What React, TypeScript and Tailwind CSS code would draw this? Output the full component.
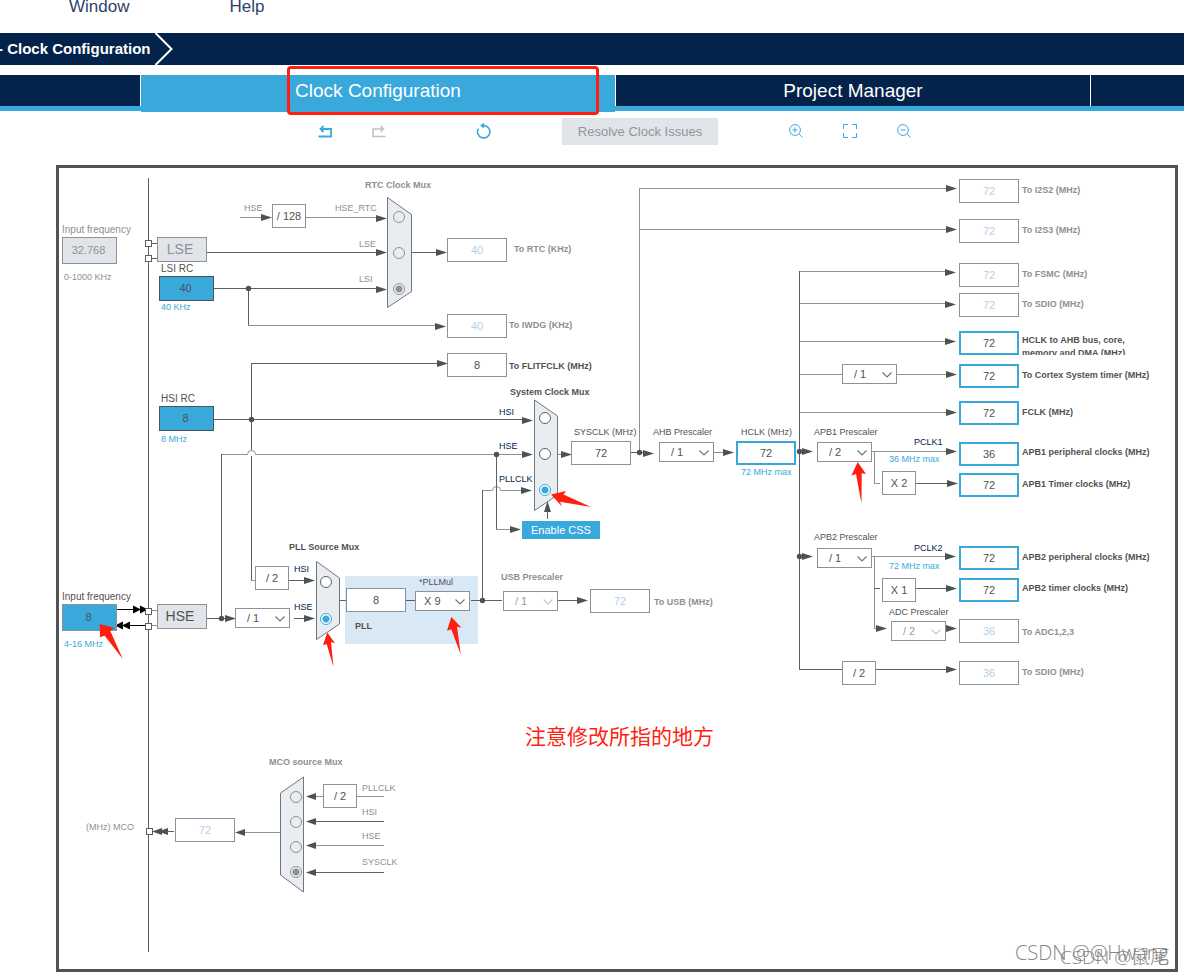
import { useState } from 'react';
import clsx from 'clsx';

// Diagram coordinates start at this corner of the frame.
const ORIGIN = { x: 59, y: 168 };
const WIDTH = 1116;
const HEIGHT = 801;

const at = (x: number, y: number) => ({ left: x - ORIGIN.x, top: y - ORIGIN.y });

type Tone = 'gray' | 'dark' | 'navy' | 'blue';

const toneClass: Record<Tone, string> = {
  gray: 'text-[#8f8f8f]',
  dark: 'text-[#525252]',
  navy: 'text-[#03234b]',
  blue: 'text-[#39a9dc]',
};

type Label = { text: string; x: number; y: number; tone: Tone; title?: boolean };

const labels: Label[] = [
  { text: '0-1000 KHz', x: 64, y: 277, tone: 'gray' },
  { text: '40 KHz', x: 161, y: 307, tone: 'blue' },
  { text: '8 MHz', x: 161, y: 439, tone: 'blue' },
  { text: '4-16 MHz', x: 64, y: 644, tone: 'blue' },
  { text: '72 MHz max', x: 741, y: 472, tone: 'blue' },
  { text: '36 MHz max', x: 889, y: 459, tone: 'blue' },
  { text: '72 MHz max', x: 889, y: 566, tone: 'blue' },
  { text: 'RTC Clock Mux', x: 365, y: 185, tone: 'gray', title: true },
  { text: 'System Clock Mux', x: 510, y: 392, tone: 'dark', title: true },
  { text: 'PLL Source Mux', x: 289, y: 547, tone: 'dark', title: true },
  { text: 'MCO source Mux', x: 269, y: 762, tone: 'gray', title: true },
  { text: 'PLL', x: 355, y: 626, tone: 'dark', title: true },
  { text: 'HSE', x: 244, y: 208, tone: 'gray' },
  { text: 'HSE_RTC', x: 335, y: 208, tone: 'gray' },
  { text: 'LSE', x: 359, y: 244, tone: 'gray' },
  { text: 'LSI', x: 359, y: 279, tone: 'gray' },
  { text: 'HSI', x: 499, y: 412, tone: 'navy' },
  { text: 'HSE', x: 499, y: 446, tone: 'navy' },
  { text: 'PLLCLK', x: 499, y: 479, tone: 'navy' },
  { text: 'HSI', x: 294, y: 569, tone: 'navy' },
  { text: 'HSE', x: 294, y: 607, tone: 'navy' },
  { text: 'PCLK1', x: 914, y: 442, tone: 'navy' },
  { text: 'PCLK2', x: 914, y: 548, tone: 'navy' },
  { text: 'PLLCLK', x: 362, y: 788, tone: 'gray' },
  { text: 'HSI', x: 362, y: 812, tone: 'gray' },
  { text: 'HSE', x: 362, y: 836, tone: 'gray' },
  { text: 'SYSCLK', x: 362, y: 862, tone: 'gray' },
];

type Field = {
  id: string;
  label: string;
  value: string;
  x: number;
  y: number;
  lx: number;
  ly: number;
  kind: 'off' | 'on' | 'main';
  bold?: boolean;
};

const fields: Field[] = [
  { id: 'rtc', label: 'To RTC (KHz)', value: '40', x: 447, y: 238, lx: 514, ly: 249, kind: 'off', bold: true },
  { id: 'iwdg', label: 'To IWDG (KHz)', value: '40', x: 447, y: 314, lx: 509, ly: 325, kind: 'off', bold: true },
  { id: 'flitf', label: 'To FLITFCLK (MHz)', value: '8', x: 447, y: 353, lx: 509, ly: 366, kind: 'on', bold: true },
  { id: 'sysclk', label: 'SYSCLK (MHz)', value: '72', x: 571, y: 441, lx: 574, ly: 432, kind: 'on' },
  { id: 'hclk', label: 'HCLK (MHz)', value: '72', x: 736, y: 441, lx: 741, ly: 432, kind: 'main' },
  { id: 'usb', label: 'To USB (MHz)', value: '72', x: 590, y: 589, lx: 654, ly: 602, kind: 'off', bold: true },
  { id: 'mco', label: '(MHz) MCO', value: '72', x: 175, y: 818, lx: 86, ly: 827, kind: 'off' },
  { id: 'i2s2', label: 'To I2S2 (MHz)', value: '72', x: 959, y: 179, lx: 1022, ly: 190, kind: 'off', bold: true },
  { id: 'i2s3', label: 'To I2S3 (MHz)', value: '72', x: 959, y: 219, lx: 1022, ly: 230, kind: 'off', bold: true },
  { id: 'fsmc', label: 'To FSMC (MHz)', value: '72', x: 959, y: 263, lx: 1022, ly: 274, kind: 'off', bold: true },
  { id: 'sdio', label: 'To SDIO (MHz)', value: '72', x: 959, y: 293, lx: 1022, ly: 304, kind: 'off', bold: true },
  { id: 'cortex', label: 'To Cortex System timer (MHz)', value: '72', x: 959, y: 364, lx: 1022, ly: 375, kind: 'main', bold: true },
  { id: 'fclk', label: 'FCLK (MHz)', value: '72', x: 959, y: 401, lx: 1022, ly: 412, kind: 'main', bold: true },
  { id: 'apb1p', label: 'APB1 peripheral clocks (MHz)', value: '36', x: 959, y: 442, lx: 1022, ly: 452, kind: 'main', bold: true },
  { id: 'apb1t', label: 'APB1 Timer clocks (MHz)', value: '72', x: 959, y: 473, lx: 1022, ly: 484, kind: 'main', bold: true },
  { id: 'apb2p', label: 'APB2 peripheral clocks (MHz)', value: '72', x: 959, y: 546, lx: 1022, ly: 557, kind: 'main', bold: true },
  { id: 'apb2t', label: 'APB2 timer clocks (MHz)', value: '72', x: 959, y: 578, lx: 1022, ly: 588, kind: 'main', bold: true },
  { id: 'adc', label: 'To ADC1,2,3', value: '36', x: 959, y: 619, lx: 1022, ly: 632, kind: 'off', bold: true },
  { id: 'sdio2', label: 'To SDIO (MHz)', value: '36', x: 959, y: 661, lx: 1022, ly: 672, kind: 'off', bold: true },
];

type Source = {
  id: string;
  label: string;
  value: string;
  x: number;
  y: number;
  lx: number;
  ly: number;
  kind: 'disabled' | 'fixed' | 'external';
};

const sources: Source[] = [
  { id: 'lse-in', label: 'Input frequency', value: '32.768', x: 62, y: 237, lx: 62, ly: 230, kind: 'disabled' },
  { id: 'lsi', label: 'LSI RC', value: '40', x: 159, y: 276, lx: 161, ly: 269, kind: 'fixed' },
  { id: 'hsi', label: 'HSI RC', value: '8', x: 159, y: 406, lx: 161, ly: 399, kind: 'fixed' },
  { id: 'hse-in', label: 'Input frequency', value: '8', x: 62, y: 604, lx: 62, ly: 597, kind: 'external' },
];

const sourceClass = {
  disabled: 'h-[27px] border-[#8c9297] bg-[#e1e5e9] text-[#8c9297]',
  fixed: 'h-[25px] border-[#4b5357] bg-[#39a9dc] text-[#4b5357]',
  external: 'h-[27px] border-[#8c9297] bg-[#39a9dc] text-[#4b5357]',
};

const fieldClass = {
  off: 'border border-[#8c9297] text-[#b5cfe8]',
  on: 'border border-[#8c9297] text-[#525252]',
  main: 'border-2 border-[#39a9dc] text-[#525252]',
};

const powers = ['/ 1', '/ 2', '/ 4', '/ 8', '/ 16'];
const multipliers = ['X 2', 'X 3', 'X 4', 'X 5', 'X 6', 'X 7', 'X 8', 'X 9', 'X 10'];

const prescalers = [
  { id: 'hse-div', name: 'HSE divider', value: '/ 1', x: 235, y: 608, options: powers },
  { id: 'pllmul', label: '*PLLMul', name: 'PLLMul', value: 'X 9', x: 415, y: 591, lx: 419, ly: 582, options: multipliers },
  { id: 'usb-div', label: 'USB Prescaler', name: 'USB', value: '/ 1', x: 503, y: 591, lx: 501, ly: 577, options: powers, disabled: true, bold: true },
  { id: 'ahb', label: 'AHB Prescaler', name: 'AHB', value: '/ 1', x: 659, y: 442, lx: 653, ly: 432, options: powers },
  { id: 'cortex-div', name: 'Cortex timer divider', value: '/ 1', x: 842, y: 364, options: powers },
  { id: 'apb1', label: 'APB1 Prescaler', name: 'APB1', value: '/ 2', x: 817, y: 442, lx: 814, ly: 432, options: powers },
  { id: 'apb2', label: 'APB2 Prescaler', name: 'APB2', value: '/ 1', x: 817, y: 548, lx: 814, ly: 537, options: powers },
  { id: 'adc-div', label: 'ADC Prescaler', name: 'ADC', value: '/ 2', x: 891, y: 621, lx: 889, ly: 612, options: powers, disabled: true },
];

const factors = [
  { text: '/ 128', x: 272, y: 204 },
  { text: '/ 2', x: 255, y: 566 },
  { text: 'X 2', x: 882, y: 471 },
  { text: 'X 1', x: 882, y: 578 },
  { text: '/ 2', x: 842, y: 661 },
  { text: '/ 2', x: 323, y: 784 },
];

const muxes = [
  { name: 'RTC Clock Mux', x: 399, inputs: [['HSE_RTC', 217], ['LSE', 253], ['LSI', 289]], picked: 'LSI', disabled: true },
  { name: 'System Clock Mux', x: 545, inputs: [['HSI', 418], ['HSE', 454], ['PLLCLK', 490]], picked: 'PLLCLK' },
  { name: 'PLL Source Mux', x: 326, inputs: [['HSI', 582], ['HSE', 619]], picked: 'HSE' },
  { name: 'MCO source Mux', x: 296, inputs: [['PLLCLK', 797], ['HSI', 822], ['HSE', 847], ['SYSCLK', 872]], picked: 'SYSCLK', disabled: true },
] as { name: string; x: number; inputs: [string, number][]; picked: string; disabled?: boolean }[];

const darkWires = [
  'M148.5 178V952',
  'M151 243.5H157M151 258.5H157M207 252.5H380',
  'M214 288.5H380M248.5 288V325',
  'M411 252.5H440',
  'M214 419.5H526M251.5 363V450M251.5 456V580M251 363.5H440',
  'M221.5 454V618M207 618.5H230M294 618.5H308M289 580.5H308',
  'M496.5 454V529M482.5 490V600M547.5 505V519',
  'M631 452.5H648M799.5 271V670M799 669.5H842M876 669.5H950',
  'M916 483.5H950M916 588.5H950M874 588.5H880',
  'M340 600.5H346M406 600.5H415M471 600.5H502M558 600.5H582',
  'M312 821.5H384M312 872.5H384M158 831.5H174',
];

const lightWires = [
  'M240 217.5H266M306 217.5H380M248 325.5H440',
  'M221 454.5H247.5A4 4 0 0 1 255.5 454.5H526M558 454.5H565',
  'M482 490.5H492.5A4 4 0 0 1 500.5 490.5H526M496 529.5H515M251 580.5H255',
  'M639.5 188V452M639 188.5H950M639 229.5H950',
  'M799 271.5H950M799 303.5H950M799 341.5H950M799 374.5H842M897 374.5H950M799 412.5H950',
  'M714 452.5H728M872 451.5H950M874.5 451V483M874 483.5H880',
  'M872 556.5H950M874.5 556V628M874 628.5H880',
  'M312 796.5H323M357 796.5H384M312 845.5H384M242 832.5H280',
  'M151 610.5H157M151 625.5H157',
];

const rightTips = [
  [272, 217], [387, 218], [387, 252], [387, 289], [447, 252], [446, 326], [448, 363],
  [533, 420], [533, 454], [532, 490], [521, 529], [572, 454], [654, 453], [734, 452],
  [236, 618], [315, 580], [315, 618], [588, 600], [813, 451], [813, 556], [887, 628],
  [957, 188], [957, 229], [956, 272], [956, 304], [956, 341], [957, 374], [957, 412],
  [957, 451], [958, 483], [956, 556], [957, 588], [957, 628], [957, 669],
];

const leftTips = [
  [306, 796], [306, 821], [306, 845], [306, 872], [235, 832], [152, 831], [158, 831],
];

const joints = [
  [248, 288], [251, 419], [221, 618], [496, 454], [482, 600], [639, 452], [799, 451], [799, 556],
];

const pins = [
  [146, 240], [146, 255], [146, 608], [146, 623], [147, 828],
];

const muxShapes = [
  '387.5,197.5 411.5,214.5 411.5,291.5 387.5,307.5',
  '534.5,400 557.5,416 557.5,495 534.5,510.5',
  '316.5,561.5 339.5,578 339.5,624 316.5,639.5',
  '303.5,777 280.5,793 280.5,875 303.5,892',
];

const markers = [
  '551,494.5 566,491 563.5,494.5 591,507 560,501.7 562,506.5',
  '451.3,617 447,630.7 451.3,629.3 460.7,654.5 457,626.7 461.5,627.7',
  '327.3,632.5 323,645 326.7,644.3 333.5,667 331,642 335,643.3',
  '857.7,462 851.3,475.7 856,474 861.5,503.5 861.7,473.3 866,474',
  '99.7,624 100,637.3 104.7,635.7 122.8,659 110.3,631 114.5,628',
];

function Wiring() {
  return (
    <svg
      width={WIDTH}
      height={HEIGHT}
      viewBox={`${ORIGIN.x} ${ORIGIN.y} ${WIDTH} ${HEIGHT}`}
      className="block"
      fill="none"
      aria-hidden="true"
    >
      <rect x="345" y="576" width="133" height="68" fill="#d9e8f5" />
      <path d={lightWires.join('')} stroke="#8f9193" />
      <path d={darkWires.join('')} stroke="#5c6062" />
      {muxShapes.map((points) => (
        <polygon key={points} points={points} fill="#e9edf1" stroke="#70777c" />
      ))}
      {rightTips.map(([x, y]) => (
        <path key={`${x}-${y}`} d={`M${x} ${y + 0.5}l-11 -3.5v7z`} fill="#4d5254" />
      ))}
      {leftTips.map(([x, y]) => (
        <path key={`${x}-${y}`} d={`M${x} ${y + 0.5}l10 -3.5v7z`} fill="#4d5254" />
      ))}
      <path d="M547.5 501l-3.5 11h7z" fill="#4d5254" />
      <path d="M117 609.5H140M146 625.5H123" stroke="#000" />
      <path
        d="M141 609.5l-8 -4v8zM148 609.5l-8 -4v8zM115 625.5l8 -4v8zM122 625.5l8 -4v8z"
        fill="#000"
      />
      {joints.map(([x, y]) => (
        <circle key={`${x}-${y}`} cx={x + 0.5} cy={y + 0.5} r="2.7" fill="#4d5254" />
      ))}
      {pins.map(([x, y]) => (
        <rect key={`${x}-${y}`} x={x - 0.5} y={y + 0.5} width="6" height="6" fill="#fff" stroke="#5c6062" />
      ))}
    </svg>
  );
}

function Text({ text, x, y, tone, title }: Label) {
  return (
    <span
      className={clsx('absolute text-[9px] leading-3 whitespace-pre', title && 'font-bold', toneClass[tone])}
      style={at(x, y - 6)}
    >
      {text}
    </span>
  );
}

function OutputField({ field }: { field: Field }) {
  return (
    <>
      <label
        htmlFor={field.id}
        className={clsx(
          'absolute whitespace-nowrap text-[9px] leading-3',
          field.bold && 'font-bold',
          field.kind === 'off' ? 'text-[#8f8f8f]' : 'text-[#525252]',
        )}
        style={at(field.lx, field.ly - 6)}
      >
        {field.label}
      </label>
      <input
        id={field.id}
        readOnly
        value={field.value}
        disabled={field.kind === 'off'}
        className={clsx('absolute h-6 w-15 bg-white text-center text-[11px]', fieldClass[field.kind])}
        style={at(field.x, field.y)}
      />
    </>
  );
}

function SourceField({ source }: { source: Source }) {
  const [value, setValue] = useState(source.value);
  return (
    <>
      <label
        htmlFor={source.id}
        className={clsx(
          'absolute whitespace-nowrap text-[10px] leading-3',
          source.kind === 'disabled' ? 'text-[#8f8f8f]' : 'text-[#525252]',
        )}
        style={at(source.lx, source.ly - 6)}
      >
        {source.label}
      </label>
      <input
        id={source.id}
        value={value}
        onChange={(e) => setValue(e.target.value)}
        readOnly={source.kind === 'fixed'}
        disabled={source.kind === 'disabled'}
        className={clsx('absolute w-[55px] border pr-0.5 pb-0.5 text-center text-[11px]', sourceClass[source.kind])}
        style={at(source.x, source.y)}
      />
    </>
  );
}

function Prescaler({ item }: { item: (typeof prescalers)[number] }) {
  return (
    <>
      {item.label && (
        <label
          htmlFor={item.id}
          className={clsx(
            'absolute text-[9px] leading-3 whitespace-nowrap',
            item.bold ? 'font-bold text-[#8f8f8f]' : 'text-[#525252]',
          )}
          style={at(item.lx ?? item.x, (item.ly ?? item.y) - 6)}
        >
          {item.label}
        </label>
      )}
      <div className="absolute h-5 w-[55px]" style={at(item.x, item.y)}>
        <select
          id={item.id}
          aria-label={item.label ? undefined : item.name}
          defaultValue={item.value}
          disabled={item.disabled}
          className={clsx(
            'block h-full w-full appearance-none border border-[#8c9297] bg-white text-[11px] opacity-100',
            item.value.startsWith('X') ? 'pl-2' : 'pl-[11px]',
            item.disabled ? 'text-[#999999]' : 'text-[#525252]',
          )}
        >
          {item.options.map((option) => (
            <option key={option}>{option}</option>
          ))}
        </select>
        <svg
          width="10"
          height="6"
          viewBox="0 0 10 6"
          fill="none"
          stroke={item.disabled ? '#c4c8cb' : '#70777c'}
          strokeWidth="1.2"
          className="pointer-events-none absolute top-2 right-[5px]"
        >
          <path d="M0.5 0.5L5 5L9.5 0.5" />
        </svg>
      </div>
    </>
  );
}

function MuxRadios({ mux }: { mux: (typeof muxes)[number] }) {
  const [picked, setPicked] = useState(mux.picked);
  return (
    <>
      {mux.inputs.map(([name, y]) => (
        <input
          key={name}
          type="radio"
          name={mux.name}
          aria-label={`${mux.name} ${name}`}
          checked={picked === name}
          disabled={mux.disabled}
          onChange={() => setPicked(name)}
          className={clsx(
            'absolute size-3 appearance-none rounded-full border',
            mux.disabled
              ? 'border-[#8c9297] checked:bg-[radial-gradient(circle,#8c9297_3px,#eef1f4_4px)]'
              : 'border-[#5c6062] bg-white checked:border-[#39a9dc] checked:bg-[radial-gradient(circle,#39a9dc_3px,#fff_4px)]',
          )}
          style={at(mux.x - 6, y - 6)}
        />
      ))}
    </>
  );
}

function ClockDiagram() {
  return (
    <main className="relative mr-1.5 mb-0.5 ml-14 overflow-hidden border-3 border-[#4f5455] bg-white">
      <Wiring />

      {sources.map((source) => (
        <SourceField key={source.id} source={source} />
      ))}
      {fields.map((field) => (
        <OutputField key={field.id} field={field} />
      ))}

      <label
        htmlFor="ahb-bus"
        className="absolute h-[21px] w-32 overflow-hidden text-[9px] leading-[13px] font-bold text-[#525252]"
        style={at(1022, 334)}
      >
        HCLK to AHB bus, core, memory and DMA (MHz)
      </label>
      <input
        id="ahb-bus"
        readOnly
        value="72"
        className="absolute h-6 w-15 border-2 border-[#39a9dc] bg-white text-center text-[11px] text-[#525252]"
        style={at(959, 331)}
      />
      <input
        aria-label="PLL input"
        readOnly
        value="8"
        className="absolute h-6 w-15 border border-[#8c9297] bg-white text-center text-[11px] text-[#525252]"
        style={at(346, 588)}
      />

      {prescalers.map((item) => (
        <Prescaler key={item.id} item={item} />
      ))}
      {factors.map((factor) => (
        <div
          key={`${factor.x}-${factor.y}`}
          className="absolute flex h-6 w-[34px] items-center justify-center border border-[#8c9297] bg-white text-[11px] text-[#525252]"
          style={at(factor.x, factor.y)}
        >
          {factor.text}
        </div>
      ))}

      <div
        className="absolute flex h-[25px] w-[50px] items-center justify-center border border-[#8c9297] bg-[#e1e5e9] pr-1 text-[14px] text-[#8c9297]"
        style={at(157, 237)}
      >
        LSE
      </div>
      <div
        className="absolute flex h-[25px] w-[50px] items-center justify-center border border-[#8c9297] bg-[#e1e5e9] pr-1 text-[14px] text-[#525252]"
        style={at(157, 604)}
      >
        HSE
      </div>

      {muxes.map((mux) => (
        <MuxRadios key={mux.name} mux={mux} />
      ))}
      {labels.map((label) => (
        <Text key={`${label.x}-${label.y}`} {...label} />
      ))}

      <button
        className="absolute h-[18px] w-[78px] bg-[#39a9dc] text-[11px] text-white"
        style={at(522, 521)}
      >
        Enable CSS
      </button>

      <p
        className="absolute font-['Noto_Sans_CJK_SC',sans-serif] text-[21px] leading-7 whitespace-nowrap text-[#ff1e10]"
        style={at(525, 721)}
      >
        注意修改所指的地方
      </p>
      <svg
        viewBox={`${ORIGIN.x} ${ORIGIN.y} ${WIDTH} ${HEIGHT}`}
        width={WIDTH}
        height={HEIGHT}
        fill="#ff1e10"
        className="pointer-events-none absolute top-0 left-0"
        aria-hidden="true"
      >
        {markers.map((points) => (
          <polygon key={points} points={points} />
        ))}
      </svg>

      <div className="pointer-events-none absolute right-1.5 bottom-0 font-['Open_Sans','Noto_Sans_CJK_SC',sans-serif] font-light whitespace-nowrap text-[#858585]">
        <span className="absolute right-0 bottom-1 text-[20px] leading-6">CSDN @@Hwang</span>
        <span className="absolute right-0 bottom-0 text-[19px] leading-6">CSDN @鼠尾</span>
      </div>
    </main>
  );
}

function Toolbar() {
  const button = 'flex h-[27px] w-[54px] items-center justify-center pb-0.5 text-[#39a9dc]';
  return (
    <div className="flex gap-[51px] pt-[7px] pb-5 pl-[298px]">
      <div className="flex">
        <button className={button} aria-label="Undo">
          <svg width="14" height="14" viewBox="0 0 14 14" fill="none" stroke="currentColor" strokeWidth="1.8">
            <path d="M0.5 12.5H13V5H2.5" />
            <path d="M5.5 2L2.5 5L5.5 8" />
          </svg>
        </button>
        <button className={button} aria-label="Redo" disabled>
          <svg width="14" height="14" viewBox="0 0 14 14" fill="none" stroke="#c2c2c2" strokeWidth="1.6">
            <path d="M13.5 12.5H1V5H11.5" />
            <path d="M8.5 2L11.5 5L8.5 8" />
          </svg>
        </button>
      </div>
      <button className={button} aria-label="Reset">
        <svg width="16" height="16" viewBox="0 0 16 16" fill="none" stroke="currentColor" strokeWidth="1.6">
          <path d="M2.4 5.6A6.2 6.2 0 1 0 8 2.6H5" />
          <path d="M8 0.6L5.4 2.6L8 4.6" />
        </svg>
      </button>
      <button className="h-[27px] w-[156px] bg-[#e1e5e9] text-[13px] text-[#8f9599]" disabled>
        Resolve Clock Issues
      </button>
      <div className="flex">
        <button className={button} aria-label="Zoom in">
          <svg width="14" height="14" viewBox="0 0 14 14" fill="none" stroke="currentColor">
            <circle cx="6" cy="6" r="5.4" />
            <path d="M9.9 9.9L13.5 13.5M6 3.5V8.5M3.5 6H8.5" />
          </svg>
        </button>
        <button className={button} aria-label="Fit to window">
          <svg width="14" height="14" viewBox="0 0 14 14" fill="none" stroke="currentColor">
            <path d="M0.5 5V0.5H5M9 0.5H13.5V5M13.5 9V13.5H9M5 13.5H0.5V9" />
          </svg>
        </button>
        <button className={button} aria-label="Zoom out">
          <svg width="14" height="14" viewBox="0 0 14 14" fill="none" stroke="currentColor">
            <circle cx="6" cy="6" r="5.4" />
            <path d="M9.9 9.9L13.5 13.5M3.5 6H8.5" />
          </svg>
        </button>
      </div>
    </div>
  );
}

export default function App() {
  return (
    <div className="overflow-hidden bg-white font-['Liberation_Sans',Arial,sans-serif]">
      <nav className="flex h-[33px] gap-[100px] pl-[69px] text-[17px] leading-[14px] text-[#2f3f6b]">
        <a href="#window">Window</a>
        <a href="#help">Help</a>
      </nav>

      <header className="flex h-8 items-center bg-[#03234b] text-[15px] font-bold text-white">
        <span className="-ml-0.5 whitespace-nowrap">- Clock Configuration</span>
        <svg width="18" height="32" viewBox="0 0 18 32" fill="none" stroke="#fff" strokeWidth="2" className="ml-1">
          <path d="M0.5 0L16.5 16L0.5 32" />
        </svg>
      </header>

      <div className="mt-2.5 grid h-9 grid-cols-[141fr_474fr_476fr_93fr] border-b-6 border-[#39a9dc] text-[19px] text-white">
        <button className="border-r border-white bg-[#03234b]" aria-label="Pinout" />
        <button className="relative -mb-1.5 bg-[#39a9dc] pb-1">
          Clock Configuration
          <span className="absolute -top-[9px] right-4 -bottom-[3px] left-[146px] rounded-sm border-3 border-[#ff1e10]" />
        </button>
        <button className="border-x border-white bg-[#03234b] pt-0.5">Project Manager</button>
        <button className="bg-[#03234b]" aria-label="Tools" />
      </div>

      <Toolbar />
      <ClockDiagram />
    </div>
  );
}
